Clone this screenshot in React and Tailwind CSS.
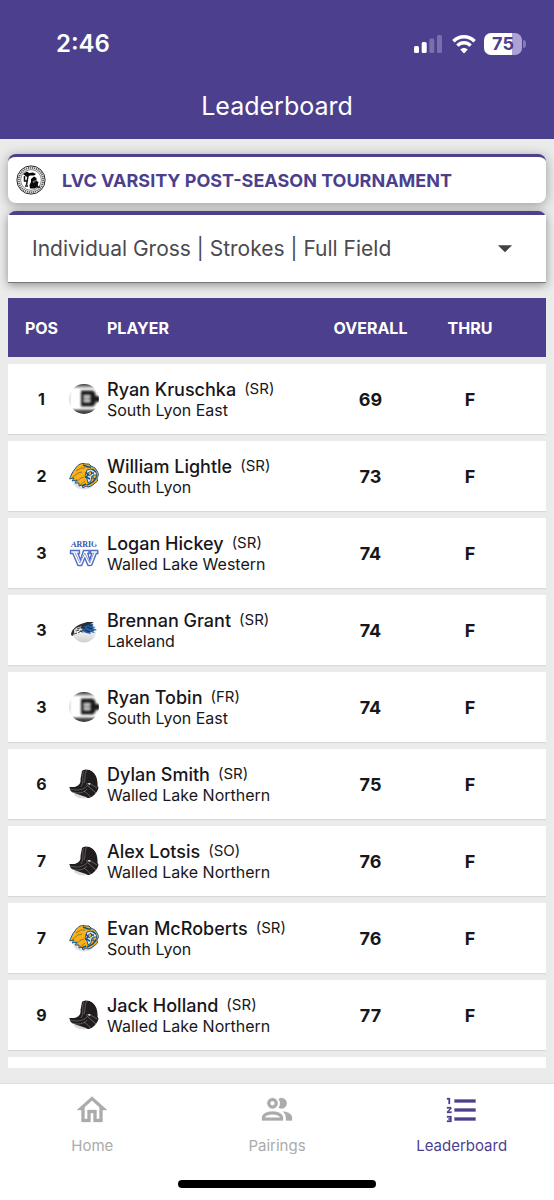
import React, { useState } from "react";
import { MdArrowDropDown } from "react-icons/md";

const players = [
    { pos: 1, name: "Ryan Kruschka", grade: "SR", school: "South Lyon East", overall: 69 },
    { pos: 2, name: "William Lightle", grade: "SR", school: "South Lyon", overall: 73 },
    { pos: 3, name: "Logan Hickey", grade: "SR", school: "Walled Lake Western", overall: 74 },
    { pos: 3, name: "Brennan Grant", grade: "SR", school: "Lakeland", overall: 74 },
    { pos: 3, name: "Ryan Tobin", grade: "FR", school: "South Lyon East", overall: 74 },
    { pos: 6, name: "Dylan Smith", grade: "SR", school: "Walled Lake Northern", overall: 75 },
    { pos: 7, name: "Alex Lotsis", grade: "SO", school: "Walled Lake Northern", overall: 76 },
    { pos: 7, name: "Evan McRoberts", grade: "SR", school: "South Lyon", overall: 76 },
    { pos: 9, name: "Jack Holland", grade: "SR", school: "Walled Lake Northern", overall: 77 },
];

const tabs = [
    {
        label: "Home",
        path: "M12 5.69L17 10.19V18H15V12H9V18H7V10.19L12 5.69M12 3L2 12H5V20H11V14H13V20H19V12H22L12 3Z",
    },
    {
        label: "Pairings",
        path: "M13.07 10.41A5 5 0 0 0 13.07 4.59A3.39 3.39 0 0 1 15 4A3.5 3.5 0 0 1 15 11A3.39 3.39 0 0 1 13.07 10.41M5.5 7.5A3.5 3.5 0 1 1 9 11A3.5 3.5 0 0 1 5.5 7.5M7.5 7.5A1.5 1.5 0 1 0 9 6A1.5 1.5 0 0 0 7.5 7.5M16 17V19H2V17S2 13 9 13 16 17 16 17M14 17C13.86 16.22 12.67 15 9 15S4.07 16.31 4 17M15.95 13A5.32 5.32 0 0 1 18 17V19H22V17S22 13.37 15.94 13Z",
    },
    {
        label: "Leaderboard",
        path: "M7 13V11H21V13H7M7 19V17H21V19H7M7 7V5H21V7H7M3 8V5H2V4H4V8H3M2 17V16H5V20H2V19H4V18.5H3V17.5H4V17H2M4.25 10A.75.75 0 0 1 5 10.75C5 10.95 4.92 11.14 4.79 11.27L3.12 13H5V14H2V13.08L4 11H2V10H4.25Z",
    },
];

function SouthLyonEastLogo() {
    return (
        <svg viewBox="0 0 30 30" className="size-full" aria-hidden="true">
            <defs>
                <filter id="sle-soft" x="-20%" y="-20%" width="140%" height="140%">
                    <feGaussianBlur stdDeviation="0.8" />
                </filter>
                <linearGradient id="sle-fade" x1="0" x2="0" y1="0" y2="1">
                    <stop offset="0" stopColor="#333" />
                    <stop offset="0.17" stopColor="#fff" />
                    <stop offset="0.8" stopColor="#fff" />
                    <stop offset="0.9" stopColor="#555" />
                    <stop offset="1" stopColor="#333" />
                </linearGradient>
            </defs>
            <rect width="30" height="30" fill="url(#sle-fade)" />
            <g filter="url(#sle-soft)">
                <path d="M-1 6 L1 6 L1 24 L-1 24 Z" fill="#c8c8c8" />
                <path
                    d="M12 6.5 H24 L26.5 9 V12 H31 V18 H26.5 V20 L24 22.5 H12 Z"
                    fill="#1e1e1e"
                />
                <path d="M15 12.6 H21 M15 16.6 H21" stroke="#e8e8e8" strokeWidth="2.2" />
                <path d="M15 14.6 H20" stroke="#8a8a8a" strokeWidth="1.4" />
            </g>
        </svg>
    );
}

function SouthLyonLogo() {
    return (
        <svg viewBox="0 0 30 30" className="size-full" aria-hidden="true">
            <ellipse cx="15" cy="22" rx="10.5" ry="6.5" fill="#dedfec" />
            <path
                d="M0.5 18 C2 15 3 11 6 8 C9 3 13 1.5 17 3 L20 3 L22 5 L26 7 L28 10 L30 13 L28 17 L28.5 20 L25 23 L22 25 L19 26 L17 25 L14 27 L13 24 L10 25 L10 22 L6 22 L8 19 L3 20 L5 17 Z"
                fill="#fbb016"
                stroke="#1e5a8c"
                strokeWidth="1"
            />
            <path d="M3 17 L9 12 L13 11 M7 21 L12 17 L15 16 M11 24 L16 20 M7 10 L12 7 L16 7" stroke="#8d7133" strokeWidth="0.9" fill="none" />
            <path d="M18 9 L22 8 L26 10 L28 13 L26 16 L23 15 L22 20 L19 22 L18 18 L16 15 Z" fill="#d9e8ef" stroke="#1e5a8c" strokeWidth="1" />
            <path d="M19 12 L22 10 L23 13 L20 15 Z M24 14 L28 14 L27 17 L24 18 Z" fill="#f4ae22" stroke="#144f82" strokeWidth="0.8" />
            <path d="M14 4 L19 6 L22 6 M23 8 L27 11 M18 24 L24 21 L27 17 M17 11 L19 14 L17 16 L21 18 M13 25 L17 23 M22 12 L25 12" stroke="#144f82" strokeWidth="1.5" fill="none" />
        </svg>
    );
}

function WesternLogo() {
    return (
        <svg viewBox="0 0 30 30" className="size-full" aria-hidden="true">
            <text x="15" y="9" textAnchor="middle" fontSize="8" fontWeight="700" fill="#3554ad" fontFamily="'Liberation Serif', serif">
                ARRIO
            </text>
            <path
                d="M1.5 12.5 H10.5 V15.5 H9 L11.5 22 L14.5 12.5 H20 V15.5 H18.8 L20.8 22 L22.8 15.5 H21.5 V12.5 H28.8 V15.5 H27.3 L22.6 27.5 H19 L15.8 20 L12.6 27.5 H9 L3.8 15.5 H1.5 Z"
                fill="#fff"
                stroke="#4f6dc2"
                strokeWidth="1.4"
            />
            <path d="M6 14.5 L10.8 25 L15.8 15 L20.8 25 L25 14.5" fill="none" stroke="#8c9dd3" strokeWidth="1" />
        </svg>
    );
}

function LakelandLogo() {
    return (
        <svg viewBox="0 0 30 30" className="size-full" aria-hidden="true">
            <defs>
                <linearGradient id="lake-fade" x1="0" x2="0" y1="0" y2="1">
                    <stop offset="0.4" stopColor="#fff" />
                    <stop offset="1" stopColor="#cfcfcf" />
                </linearGradient>
            </defs>
            <circle cx="15" cy="15" r="12.5" fill="url(#lake-fade)" />
            <path d="M11 12 L14 9 L20 8 L25 9 L22 11 L27 12 L24 13 L28 15 L24 16 L26 18 L21 17 L22 19 L17 18 L13 16 Z" fill="#24609f" />
            <path d="M2 20 C2 15 7 11 12 9 L18 7 L25 7 L19 10 L14 12 L17 13 L12 15 L15 18 L10 16 L6 15 L4 21 Z" fill="#282e38" />
            <path d="M7 13 L13 11 L11 13 L14 14 L11 16 L7 16 L5 19 L5 15 Z" fill="#d4d4d4" />
            <path d="M8 14 L11 13 M7 16 L10 15" stroke="#333" strokeWidth="0.8" />
            <path d="M16 15 L21 17 M18 12 L23 14 M20 10 L24 11" stroke="#142f56" strokeWidth="1.2" />
            <path d="M9 18 L12 16 M5 19 L8 18" stroke="#333" strokeWidth="0.9" />
        </svg>
    );
}

function NorthernLogo() {
    return (
        <svg viewBox="0 0 30 30" className="size-full" aria-hidden="true">
            <ellipse cx="14" cy="25" rx="9" ry="4.5" fill="#dadada" />
            <path
                d="M13 2 C15 0 20 0 23 2 C27 5 29 11 28.5 17 L30 19 L29 24 C25 28 21 31 17 28 L8 25 L1 22 L0 18 L5 18 C10 17 12 14 11.5 10 Z"
                fill="#211c1d"
            />
            <path d="M15 2 C12 6 16 12 12 18 M18 1 C15 5 17 9 15 14 M1 20 C8 22 14 21 18 17 M3 23 C9 25 15 24 18 20" fill="none" stroke="#7a7676" strokeWidth="0.7" />
            <path d="M17 15 C21 14 25 17 28 19 M18 16 L27 24 M15 22 C19 25 21 27 21 28" fill="none" stroke="#8a8686" strokeWidth="0.7" />
            <path d="M19 14 L22 14.5 L20 16 Z" fill="#fff" />
        </svg>
    );
}

function TournamentSeal() {
    return (
        <svg viewBox="0 0 30 30" className="size-[30px] shrink-0" aria-hidden="true">
            <circle cx="15" cy="15" r="14.1" fill="#fff" stroke="#222" strokeWidth="1" />
            <circle cx="15" cy="15" r="12.2" fill="none" stroke="#666" strokeWidth="2" strokeDasharray="1.3 0.7" />
            <circle cx="15" cy="15" r="10.4" fill="#fff" stroke="#333" strokeWidth="0.6" />
            <path d="M7 9 L11 6.5 L13 8 L17 7.5 L20 9 L18 10.5 L14 10.5 L11 12 L9 10.5 Z" fill="#080808" />
            <path d="M15 14 L18 11.5 L20.5 13 L20.5 16 L22.5 17 L21.5 21 L19 23.5 L14 23.5 L13.5 20 L15 17 Z" fill="#080808" />
            <path d="M8.5 11 V16 H11.5 M12 11 L10.5 20 M9 21 H12 M21 18 V22 H24" fill="none" stroke="#111" strokeWidth="1.5" />
            <path d="M17 16 L18 18 M19 15 V17" stroke="#fff" strokeWidth="0.6" />
        </svg>
    );
}

const logos = {
    "South Lyon East": SouthLyonEastLogo,
    "South Lyon": SouthLyonLogo,
    "Walled Lake Western": WesternLogo,
    Lakeland: LakelandLogo,
    "Walled Lake Northern": NorthernLogo,
};

function StatusBar() {
    return (
        <div className="flex items-center justify-between pt-7 pr-7 pl-14">
            <span className="text-2xl leading-8 font-semibold">2:46</span>
            <div className="flex items-center gap-2">
                <svg viewBox="0 0 30 20" className="h-5 w-[30px]" fill="#fff" aria-hidden="true">
                    <rect x="0" y="12" width="5" height="7" rx="1.5" />
                    <rect x="7.7" y="8" width="5" height="11" rx="1.5" />
                    <rect x="15.3" y="4.5" width="5" height="14.5" rx="1.5" opacity="0.25" />
                    <rect x="23" y="1" width="5" height="18" rx="1.5" opacity="0.25" />
                </svg>
                <svg viewBox="0 0 24 20" className="h-5 w-6" fill="none" stroke="#fff" strokeWidth="3.4" aria-hidden="true">
                    <path d="M1.4 7.3 C7.5 1.2 16.5 1.2 22.6 7.3" />
                    <path d="M5.4 11.6 C9.2 7.8 14.8 7.8 18.6 11.6" />
                    <path d="M12 19.5 L8.2 15.6 C10.3 13.5 13.7 13.5 15.8 15.6 Z" fill="#fff" stroke="none" />
                </svg>
                <div className="flex items-center gap-px">
                    <span className="flex h-[22px] w-[38px] items-center justify-center rounded-[7px] bg-linear-to-r from-white from-75% to-[#aca3d3] to-75% text-lg font-bold text-[#4c3f8e]">
                        75
                    </span>
                    <span className="h-2 w-[3px] rounded-r-full bg-[#8279b5]" />
                </div>
            </div>
        </div>
    );
}

function PlayerRow({ player }) {
    const Logo = logos[player.school];

    return (
        <tr className="h-[70px] bg-white shadow-[0_1px_1px_rgba(0,0,0,0.08)]">
            <td className="pl-1.5 text-center text-base font-bold">{player.pos}</td>
            <td>
                <div className="flex items-center gap-2">
                    <span className="size-[30px] shrink-0 overflow-hidden rounded-full">
                        <Logo />
                    </span>
                    <div>
                        <p className="pt-px text-lg leading-[21px] font-medium">
                            {player.name}
                            <span className="ml-2 align-[2px] text-[15px] leading-4 font-normal">({player.grade})</span>
                        </p>
                        <p className="text-base leading-5">{player.school}</p>
                    </div>
                </div>
            </td>
            <td className="pt-px text-center text-lg font-bold">{player.overall}</td>
            <td className="pt-px pr-[26px] text-center text-lg font-bold">F</td>
        </tr>
    );
}

export default function App() {
    const [board, setBoard] = useState("individual-gross");
    const [activeTab, setActiveTab] = useState("Leaderboard");

    return (
        <div className="flex h-screen flex-col bg-[#ebebeb] font-['Inter',sans-serif] text-[#17171b]">
            <header className="h-[139px] shrink-0 bg-[#4c3f8e] text-white">
                <StatusBar />
                <h1 className="mt-7 text-center text-[25px] leading-9 font-normal">Leaderboard</h1>
            </header>

            <main className="flex min-h-0 flex-1 flex-col px-2 pt-[15px] pb-[15px]">
                {/* Tournament */}
                <section className="flex h-[49px] shrink-0 items-center gap-4 rounded-lg border-t-3 border-[#4c3f8e] bg-white pl-2 shadow-[0_2px_12px_rgba(0,0,0,0.35)]">
                    <TournamentSeal />
                    <h2 className="pt-0.5 text-lg font-bold text-[#4c3f8e]">LVC VARSITY POST-SEASON TOURNAMENT</h2>
                </section>

                {/* Board picker */}
                <div className="relative mt-2 shrink-0 rounded-t-lg border-t-4 border-[#4c3f8e] bg-white shadow-[0_2px_10px_rgba(0,0,0,0.4)]">
                    <select
                        aria-label="Leaderboard type"
                        value={board}
                        onChange={(e) => setBoard(e.target.value)}
                        className="h-[68px] w-full appearance-none border-b border-[#777] bg-white pt-px pr-16 pl-6 text-[21px] text-[#4a4a50] outline-none"
                    >
                        <option value="individual-gross">Individual Gross | Strokes | Full Field</option>
                    </select>
                    <MdArrowDropDown size={34} className="pointer-events-none absolute top-4 right-6 text-[#414147]" />
                </div>

                {/* Standings */}
                <div className="mt-2 min-h-0 flex-1 overflow-y-auto [scrollbar-width:none]">
                    <table className="w-full table-fixed border-separate border-spacing-x-0 border-spacing-y-[7px]">
                        <thead>
                            <tr className="h-[59px] bg-[#4c3f8e] text-base text-white">
                                <th className="w-[61px] pl-1.5 font-bold">POS</th>
                                <th className="pl-[38px] text-left font-bold">PLAYER</th>
                                <th className="w-[99px] font-bold">OVERALL</th>
                                <th className="w-[126px] pr-[26px] font-bold">THRU</th>
                            </tr>
                        </thead>
                        <tbody>
                            {players.map((player) => (
                                <PlayerRow key={player.name} player={player} />
                            ))}
                            <tr className="h-[70px] bg-white">
                                <td colSpan={4} />
                            </tr>
                        </tbody>
                    </table>
                </div>
            </main>

            <footer className="h-[117px] shrink-0 border-t border-[#dedede] bg-white">
                <nav className="grid grid-cols-3">
                    {tabs.map(({ label, path }) => (
                        <button
                            key={label}
                            type="button"
                            onClick={() => setActiveTab(label)}
                            className={`flex flex-col items-center gap-1.5 pt-2 text-[15px] leading-6 ${
                                activeTab === label ? "text-[#4c3f8e]" : "text-[#ababab]"
                            }`}
                        >
                            <svg viewBox="0 0 24 24" className="size-9" fill="currentColor" stroke="currentColor" strokeWidth="0.2" aria-hidden="true">
                                <path d={path} />
                            </svg>
                            {label}
                        </button>
                    ))}
                </nav>
                <div className="mx-auto mt-[22px] h-2 w-[198px] rounded-full bg-black" />
            </footer>
        </div>
    );
}
